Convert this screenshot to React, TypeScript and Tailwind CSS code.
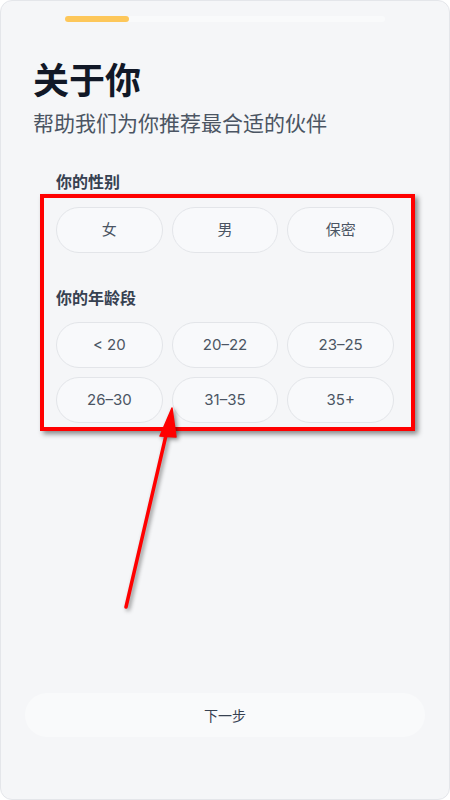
import React from "react";

const genders = ["女", "男", "保密"];
const ages = ["< 20", "20–22", "23–25", "26–30", "31–35", "35+"];

function Chip({ label }: { label: string }) {
  return (
    <button className="h-[46px] rounded-full border border-[#e3e5e9] bg-[#f8f9fb] text-[15px] text-[#4b5563] flex items-center justify-center">
      {label}
    </button>
  );
}

export default function App() {
  return (
    <div
      className="w-[450px] h-[800px] bg-white"
      style={{ fontFamily: "Inter, 'Noto Sans CJK SC', sans-serif" }}
    >
      <div className="relative h-full rounded-xl border border-[#e4e6ea] bg-[#f5f6f8] flex flex-col overflow-hidden">
        <div className="mt-[15px] mx-[64px] h-[6px] rounded-full bg-[#f9fafb]">
          <div className="h-full w-[64px] rounded-full bg-[#fdc75a]" />
        </div>

        <h1 className="mt-[39px] px-[32px] text-[36px] leading-[40px] font-bold text-[#111827]">
          关于你
        </h1>
        <p className="mt-[9px] px-[32px] text-[21px] leading-[28px] text-[#4b5563]">
          帮助我们为你推荐最合适的伙伴
        </p>

        <div className="px-[55px]">
          <h2 className="mt-[32px] text-[16px] leading-[24px] font-bold text-[#374151]">
            你的性别
          </h2>
          <div className="mt-[13px] grid grid-cols-3 gap-[9px]">
            {genders.map((g) => (
              <Chip key={g} label={g} />
            ))}
          </div>

          <h2 className="mt-[33px] text-[16px] leading-[24px] font-bold text-[#374151]">
            你的年龄段
          </h2>
          <div className="mt-[12px] grid grid-cols-3 gap-[9px]">
            {ages.map((a) => (
              <Chip key={a} label={a} />
            ))}
          </div>
        </div>

        <button className="mt-auto mb-[62px] mx-[24px] h-[44px] rounded-full bg-[#f9fafb] text-[14px] text-[#374151] flex items-center justify-center">
          下一步
        </button>

        {/* annotation overlay */}
        <div className="absolute left-[39px] top-[193px] w-[375px] h-[237px] border-[4px] border-[#ff0000] shadow-[3px_3px_5px_rgba(0,0,0,0.45)] pointer-events-none" />
        <svg
          className="absolute left-0 top-0 pointer-events-none"
          width="450"
          height="800"
          style={{ filter: "drop-shadow(2px 2px 2px rgba(0,0,0,0.45))" }}
        >
          <line x1="125" y1="606" x2="166" y2="430" stroke="#ff0000" strokeWidth="3.5" strokeLinecap="round" />
          <polygon points="171,407 159,435 175,436" fill="#ff0000" stroke="#ff0000" strokeWidth="1.5" strokeLinejoin="round" />
        </svg>
      </div>
    </div>
  );
}
